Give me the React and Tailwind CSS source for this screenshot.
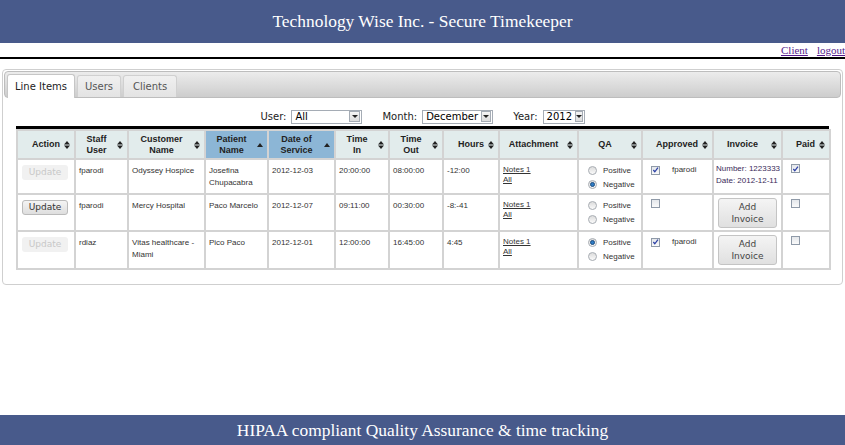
import React from 'react';

const cols = [
  { label: ['Action'], w: 58, align: 'right' },
  { label: ['Staff', 'User'], w: 53 },
  { label: ['Customer', 'Name'], w: 77 },
  { label: ['Patient', 'Name'], w: 63, sorted: true },
  { label: ['Date of', 'Service'], w: 67, sorted: true },
  { label: ['Time', 'In'], w: 54 },
  { label: ['Time', 'Out'], w: 54 },
  { label: ['Hours'], w: 56, align: 'right' },
  { label: ['Attachment'], w: 79 },
  { label: ['QA'], w: 64 },
  { label: ['Approved'], w: 71, align: 'right' },
  { label: ['Invoice'], w: 69 },
  { label: ['Paid'], w: 48, align: 'right' },
];

const rows = [
  { enabled: false, user: 'fparodi', customer: 'Odyssey Hospice', patient: 'Josefina Chupacabra', date: '2012-12-03', tin: '20:00:00', tout: '08:00:00', hours: '-12:00', qa: 'neg', approved: true, invoice: { number: '1223333', date: '2012-12-11' }, paid: true, h: 'h-[35px]' },
  { enabled: true, user: 'fparodi', customer: 'Mercy Hospital', patient: 'Paco Marcelo', date: '2012-12-07', tin: '09:11:00', tout: '00:30:00', hours: '-8:-41', qa: null, approved: false, invoice: null, paid: false, h: 'h-[37px]' },
  { enabled: false, user: 'rdiaz', customer: 'Vitas healthcare - Miami', patient: 'Pico Paco', date: '2012-12-01', tin: '12:00:00', tout: '16:45:00', hours: '4:45', qa: 'pos', approved: true, invoice: null, paid: false, h: 'h-[38px]' },
];

function SortIcon({ up }) {
  if (up) {
    return (
      <svg width="6" height="4" viewBox="0 0 6 4" className="shrink-0">
        <path d="M0 4 L3 0 L6 4 Z" fill="#222" />
      </svg>
    );
  }
  return (
    <svg width="6" height="8" viewBox="0 0 6 8" className="shrink-0">
      <path d="M0 3.5 L3 0 L6 3.5 Z M0 4.5 L3 8 L6 4.5 Z" fill="#222" />
    </svg>
  );
}

function Checkbox({ checked }) {
  return (
    <span className="inline-flex w-[9px] h-[9px] border border-[#8f9aa8] bg-gradient-to-b from-[#e4e7eb] to-[#fafafa] items-center justify-center">
      {checked && (
        <svg width="8" height="8" viewBox="0 0 8 8">
          <path d="M1.5 4 L3.2 6 L6.8 1.2" stroke="#2b3fa5" strokeWidth="1.4" fill="none" />
        </svg>
      )}
    </span>
  );
}

function Radio({ on }) {
  return (
    <span className="inline-flex w-[9px] h-[9px] rounded-full border border-[#a9aeb4] bg-gradient-to-b from-[#dcdcdc] to-[#fbfbfb] items-center justify-center">
      {on && <span className="w-[5px] h-[5px] rounded-full bg-[#2d7bc4] border border-[#1d4d80]" />}
    </span>
  );
}

function Select({ value, w }) {
  return (
    <div className={`flex items-center h-[14px] border border-[#a5acb5] bg-white ${w}`}>
      <span className="flex-1 px-[3px] text-[10px] leading-none text-black">{value}</span>
      <span className="w-[11px] h-[11px] mr-[1px] border border-[#a5acb5] bg-gradient-to-b from-[#f5f5f5] to-[#dcdcdc] flex items-center justify-center">
        <svg width="6" height="3" viewBox="0 0 6 3"><path d="M0 0 L6 0 L3 3 Z" fill="#222" /></svg>
      </span>
    </div>
  );
}

function Cell({ children, className = '' }) {
  return <td className={`border-2 border-[#d3d3d3] align-top px-[3px] pt-[5px] ${className}`}>{children}</td>;
}

export default function App() {
  return (
    <div className="w-[845px] h-[445px] flex flex-col bg-white overflow-hidden font-['Liberation_Sans',Arial,sans-serif]">
      <div className="h-[43px] bg-[#485a8b] flex items-center justify-center">
        <h1 className="text-white text-[17.4px] font-['Liberation_Serif',serif]">Technology Wise Inc. - Secure Timekeeper</h1>
      </div>

      <div className="h-[13px] flex justify-end items-end gap-[9px] font-['Liberation_Serif',serif] text-[11px]">
        <a href="#" className="text-[#551a8b] underline leading-none">Client</a>
        <a href="#" className="text-[#551a8b] underline leading-none">logout</a>
      </div>
      <div className="h-[2px] mt-[1px] bg-black" />

      <div className="mx-[2px] mt-[10px] border border-[#cfcfcf] rounded-[4px] p-[1px] pb-[14px] flex flex-col">
        <div className="h-[27px] rounded-[4px] border border-[#bdbdbd] bg-gradient-to-b from-[#ececec] to-[#cdcdcd] flex items-end pl-[2px] gap-[2px] font-['DejaVu_Sans',Verdana,sans-serif] text-[10px]">
          <div className="h-[24px] px-[7px] flex items-center bg-white border border-b-0 border-[#c6c6c6] rounded-t-[3px] text-[#222] -mb-px">Line Items</div>
          <div className="h-[22px] px-[7px] flex items-center bg-gradient-to-b from-[#f0f0f0] to-[#e3e3e3] border border-b-0 border-[#d0d0d0] rounded-t-[3px] text-[#555]">Users</div>
          <div className="h-[22px] px-[9px] flex items-center bg-gradient-to-b from-[#f0f0f0] to-[#e3e3e3] border border-b-0 border-[#d0d0d0] rounded-t-[3px] text-[#555]">Clients</div>
        </div>

        <div className="flex justify-center items-center gap-[5px] mt-[11px] font-['DejaVu_Sans',Verdana,sans-serif] text-[10px] text-[#222]">
          <span>User:</span>
          <Select value="All" w="w-[71px]" />
          <span className="ml-[15px]">Month:</span>
          <Select value="December" w="w-[71px]" />
          <span className="ml-[15px]">Year:</span>
          <Select value="2012" w="w-[42px]" />
        </div>

        <div className="ml-[12px] mt-[2px] w-[813px] border-t-[3px] border-black">
          <table className="table-fixed border-collapse w-[813px] text-[8px] text-[#333]">
            <colgroup>
              {cols.map((c, i) => <col key={i} style={{ width: c.w }} />)}
            </colgroup>
            <thead>
              <tr className="h-[29px]">
                {cols.map((c, i) => (
                  <th key={i} className={`border-2 border-[#d3d3d3] px-[4px] font-bold text-[9px] leading-[11px] text-[#222] ${c.sorted ? 'bg-[#8cb6d6]' : 'bg-[#e2ecec]'}`}>
                    <div className={`flex items-center gap-[4px] ${c.align === 'right' ? 'justify-end' : 'justify-between'}`}>
                      <span className={`${c.align === 'right' ? '' : 'flex-1'} text-center`}>
                        {c.label.map((l, j) => <div key={j}>{l}</div>)}
                      </span>
                      <SortIcon up={c.sorted} />
                    </div>
                  </th>
                ))}
              </tr>
            </thead>
            <tbody>
              {rows.map((r, i) => (
                <tr key={i} className={r.h}>
                  <Cell className="!px-[4px]">
                    <div className={`w-[46px] h-[15px] rounded-[3px] flex items-center justify-center font-['DejaVu_Sans',Verdana,sans-serif] text-[9px] ${r.enabled ? 'bg-gradient-to-b from-[#f4f4f4] to-[#dedede] border border-[#bbb] text-[#333]' : 'bg-[#f1f1f1] text-[#c8c8c8]'}`}>Update</div>
                  </Cell>
                  <Cell>{r.user}</Cell>
                  <Cell>{r.customer}</Cell>
                  <Cell className="leading-[12px]">{r.patient}</Cell>
                  <Cell>{r.date}</Cell>
                  <Cell>{r.tin}</Cell>
                  <Cell>{r.tout}</Cell>
                  <Cell>{r.hours}</Cell>
                  <Cell className="leading-[10px]">
                    <a href="#" className="underline text-[#333] block">Notes 1</a>
                    <a href="#" className="underline text-[#333] block">All</a>
                  </Cell>
                  <Cell className="!pl-[9px] !pt-[4px]">
                    <div className="flex items-center gap-[6px] h-[13px]"><Radio on={r.qa === 'pos'} /><span>Positive</span></div>
                    <div className="flex items-center gap-[6px] h-[13px] mt-[1px]"><Radio on={r.qa === 'neg'} /><span>Negative</span></div>
                  </Cell>
                  <Cell className="!pl-[8px] !pt-[4px]">
                    <div className="flex items-center gap-[12px]">
                      <Checkbox checked={r.approved} />
                      {r.approved && <span>fparodi</span>}
                    </div>
                  </Cell>
                  <Cell className="!px-[2px] !pt-[3px]">
                    {r.invoice ? (
                      <div className="leading-[12px] whitespace-nowrap text-[#3a2a5a]">
                        <div>Number: {r.invoice.number}</div>
                        <div>Date: {r.invoice.date}</div>
                      </div>
                    ) : (
                      <div className="mx-auto w-[59px] h-[30px] rounded-[3px] border border-[#c4c4c4] bg-gradient-to-b from-[#f4f4f4] to-[#e0e0e0] flex flex-col items-center justify-center font-['DejaVu_Sans',Verdana,sans-serif] text-[9px] leading-[12px] text-[#444]">
                        <span>Add</span>
                        <span>Invoice</span>
                      </div>
                    )}
                  </Cell>
                  <Cell className="!pl-[8px] !pt-[4px]">
                    <Checkbox checked={r.paid} />
                  </Cell>
                </tr>
              ))}
            </tbody>
          </table>
        </div>
      </div>

      <div className="flex-1" />
      <div className="h-[30px] bg-[#485a8b] flex items-center justify-center">
        <p className="text-white text-[17.4px] font-['Liberation_Serif',serif]">HIPAA compliant Quality Assurance &amp; time tracking</p>
      </div>
    </div>
  );
}
